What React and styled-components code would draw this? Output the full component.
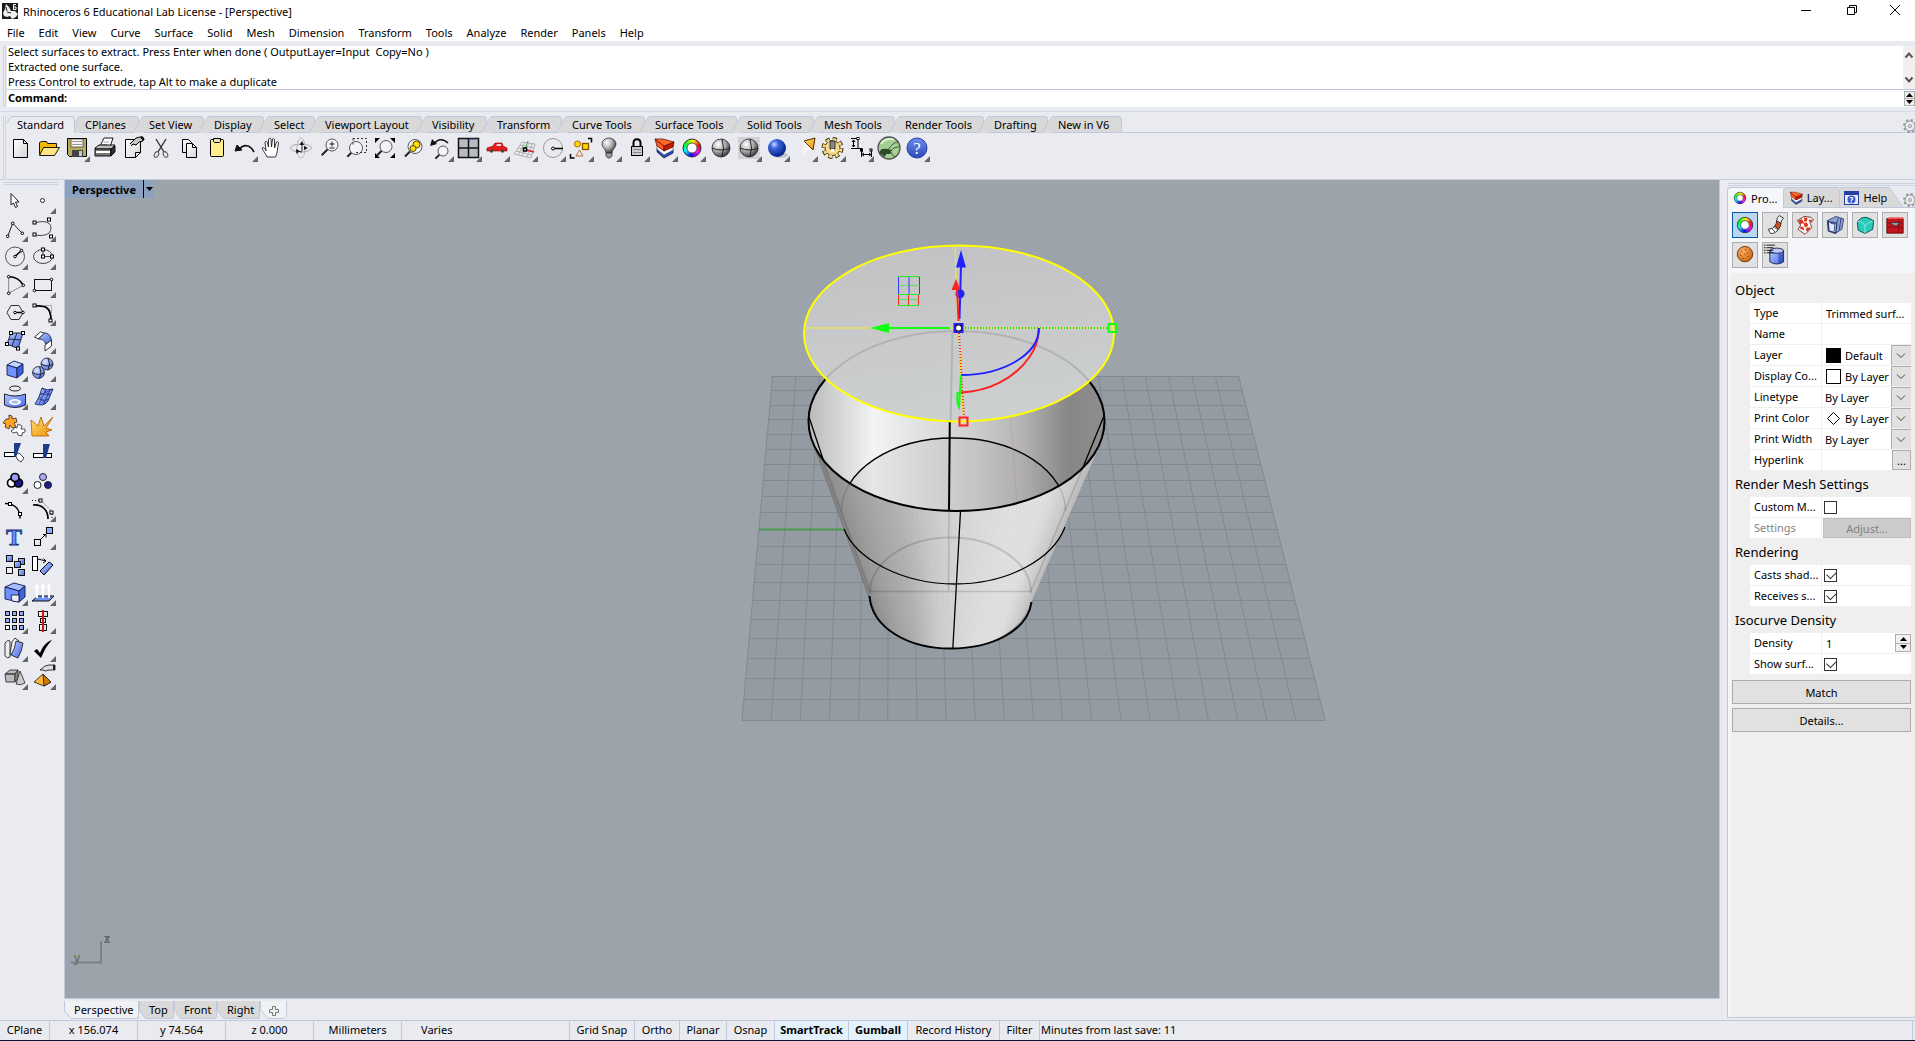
import React, { useState } from 'react';
import styled, { createGlobalStyle } from 'styled-components';

const GlobalStyle = createGlobalStyle`
  * {
    box-sizing: border-box;
  }

  body {
    margin: 0;
    background: #eaebf0;
    color: #000;
    font-family: "Noto Sans", "Open Sans", sans-serif;
    font-size: 11px;
    line-height: 15px;
  }

  button, input, select {
    font: inherit;
    color: inherit;
  }
`;

const LINE = '#c0c8dc';

const Window = styled.div`
  display: flex;
  flex-direction: column;
  height: 100vh;
  min-height: 800px;
  overflow: hidden;
  border-bottom: 1px solid #0a1230;
`;

const TitleBar = styled.header`
  display: flex;
  align-items: center;
  height: 22px;
  padding-left: 2px;
  background: #fff;
`;

const Title = styled.h1`
  flex: 1;
  margin: 0 0 0 5px;
  font-size: 11px;
  font-weight: 400;
`;

const WindowButton = styled.button`
  width: 46px;
  height: 22px;
  padding: 0;
  border: 0;
  background: none;

  &:last-child {
    width: 40px;
  }
`;

const MenuBar = styled.nav`
  display: flex;
  height: 19px;
  background: #fff;
`;

const MenuItem = styled.button`
  padding: 2px 7px 0;
  border: 0;
  background: none;
  white-space: nowrap;
`;

const DockRow = styled.section`
  display: flex;
  padding-left: 3px;
`;

const Grip = styled.div`
  width: 3px;
  margin-right: 1px;
  border: solid #ccd3e4;
  border-width: 0 1px;
`;

const CommandDock = styled(DockRow)`
  height: 71px;
  padding: 5px 0 4px 3px;
  border-bottom: 1px solid #d3daea;
`;

const CommandPane = styled.div`
  flex: 1;
  height: 61px;
`;

const History = styled.div`
  display: flex;
  justify-content: space-between;
  height: 43px;
  padding-left: 1px;
  background: #fff;
`;

const HistoryText = styled.div`
  margin-top: -2px;
  white-space: pre;
`;

const ScrollArrows = styled.div`
  display: flex;
  flex-direction: column;
  justify-content: space-between;
  width: 12px;
  padding: 3px 0;
  background: #f0f0f0;
`;

const ScrollButton = styled.button`
  display: block;
  height: 12px;
  padding: 0;
  border: 0;
  background: none;
  line-height: 0;
`;

const CommandLine = styled.div`
  display: flex;
  height: 18px;
  border-top: 1px solid #bcc5da;
  padding-left: 1px;
  background: #fff;
  font-weight: 700;
`;

const CommandInput = styled.input`
  flex: 1;
  border: 0;
  outline: 0;
  background: none;
`;

const Spin = styled.div`
  display: flex;
  flex-direction: column;
  align-self: stretch;
  width: ${(props) => props.$w}px;
  margin: 1px 0;
  border: 1px solid #adadad;
`;

const SpinButton = styled.button`
  display: flex;
  flex: 1;
  align-items: center;
  justify-content: center;
  padding: 0;
  border: 0;
  border-bottom: ${(props) => (props.$line ? '1px solid #adadad' : '0')};
  background: #f0f0f0;
  line-height: 0;
`;

const ToolDock = styled(DockRow)`
  height: 68px;
  padding-top: 4px;
  border-bottom: 1px solid #c8cfe0;
`;

const ToolPane = styled.div`
  flex: 1;
  min-width: 0;
`;

const TabList = styled.div`
  display: flex;
  align-items: flex-start;
  height: 17px;
  overflow: hidden;
  box-shadow: inset 0 -1px ${LINE};
`;

const TopTab = styled.button`
  display: flex;
  position: relative;
  z-index: ${(props) => (props.$active ? 1 : 0)};
  width: ${(props) => props.$w + 6}px;
  height: ${(props) => (props.$active ? 17 : 16)}px;
  margin-left: -6px;
  padding: 0;
  border: 0;
  background: none;
  white-space: nowrap;
`;

const TopTabLabel = styled.span`
  flex: 1;
  height: 100%;
  padding-left: 5px;
  border: solid ${LINE};
  border-width: 1px 1px 0 0;
  border-top-right-radius: 4px;
  background: ${(props) => (props.$active ? '#eaebf0' : '#d9d9d9')};
  text-align: left;
`;

const TabGear = styled.button`
  margin-left: auto;
  padding: ${(props) => props.$drop || 0}px 0 0;
  width: 12px;
  height: 20px;
  border: 0;
  background: none;
  line-height: 0;
  overflow: hidden;
`;

const IconRow = styled.div`
  display: flex;
  padding-top: 1px;
  margin-left: -1px;
`;

const ToolButton = styled.button`
  width: 28px;
  height: 28px;
  padding: 0;
  border: 0;
  background: none;
  line-height: 0;
`;

const Main = styled.main`
  display: flex;
  flex: 1;
  min-height: 0;
`;

const SideBar = styled.aside`
  width: 64px;
  padding-top: 2px;
`;

const SideGrip = styled.div`
  height: 3px;
  margin: 0 6px 1px 3px;
  border: solid #ccd3e4;
  border-width: 1px 0;
`;

const SideGrid = styled.div`
  display: grid;
  grid-template-columns: 28px 28px;
`;

const Center = styled.div`
  display: flex;
  flex: 1;
  flex-direction: column;
  min-width: 0;
`;

const Viewport = styled.div`
  position: relative;
  flex: 1;
  min-height: 0;
  border: solid ${LINE};
  border-width: 0 1px 1px 1px;
  background: #9ca3aa;
`;

const Scene = styled.svg`
  display: block;
  width: 100%;
  height: 100%;
`;

const ViewportTitle = styled.div`
  position: absolute;
  top: 0;
  left: 0;
  display: flex;
  align-items: center;
  height: 18px;
  padding-left: 7px;
  background: #8ba1be;
  font-weight: 700;
`;

const ViewportMenu = styled.button`
  width: 11px;
  height: 18px;
  margin-left: 7px;
  padding: 0 0 0 1px;
  border: 0;
  border-left: 1px solid #000;
  background: none;
  line-height: 0;
`;

const ViewTabs = styled.div`
  display: flex;
  height: 21px;
  padding-top: 2px;
`;

const ViewTab = styled.button`
  display: flex;
  width: ${(props) => props.$w}px;
  height: 18px;
  padding: 0;
  border: 0;
  background: none;
`;

const ViewTabLabel = styled.span`
  flex: 1;
  height: 18px;
  padding-left: 2px;
  border: solid ${LINE};
  border-width: 0 1px 1px 0;
  border-bottom-right-radius: 3px;
  background: ${(props) => (props.$active ? '#f0f1f5' : '#d9d9d9')};
  line-height: 17px;
  text-align: left;
`;

const Panel = styled.aside`
  display: flex;
  flex-direction: column;
  width: 188px;
  margin: 3px 0 2px 7px;
`;

const PanelGrip = styled.div`
  height: 3px;
  margin-bottom: 1px;
  margin-left: 1px;
  border: solid #ccd3e4;
  border-width: 1px 0;
`;

const PanelTabs = styled.div`
  display: flex;
  align-items: flex-start;
  height: 21px;
  overflow: hidden;
  box-shadow: inset 0 -1px ${LINE};
`;

const PanelTab = styled.button`
  display: flex;
  width: ${(props) => props.$w}px;
  height: ${(props) => (props.$active ? 21 : 20)}px;
  padding: 0;
  border: 0;
  background: none;
`;

const PanelTabLabel = styled.span`
  display: flex;
  flex: 1;
  gap: 2px;
  align-items: center;
  height: 100%;
  padding-left: 3px;
  border: solid ${LINE};
  border-width: 1px 0 0 1px;
  border-top-left-radius: 4px;
  background: ${(props) => (props.$active ? '#f5f6fa' : '#d9d9d9')};
  white-space: nowrap;
`;

const PanelBody = styled.div`
  flex: 1;
  padding-left: 3px;
  border: solid ${LINE};
  border-width: 0 0 1px 1px;
  background: #f5f6fa;
`;

const PageButtons = styled.div`
  display: flex;
  flex-wrap: wrap;
  gap: 4px;
  padding: 4px 6px 11px 1px;
  height: 65px;
`;

const PageButton = styled.button`
  width: 26px;
  height: 26px;
  padding: 0;
  border: 1px solid ${(props) => (props.$active ? '#0a5aa8' : '#adadad')};
  background: ${(props) => (props.$active ? '#b9d8f0' : '#e1e1e1')};
  line-height: 0;
`;

const Properties = styled.form`
  height: calc(100% - 65px);
  padding: 5px 4px 0 1px;
  background: #efefef;
`;

const Group = styled.fieldset`
  min-width: 0;
  margin: 0;
  padding: 0;
  border: 0;
`;

const GroupTitle = styled.legend`
  height: ${(props) => props.$h || 26}px;
  padding: 0 3px;
  font-size: 13px;
  line-height: ${(props) => props.$h || 26}px;
`;

const Row = styled.div`
  display: grid;
  grid-template-columns: 71px 1fr;
  gap: 1px;
  height: 21px;
  padding: 0 0 1px 18px;
`;

const RowLabel = styled.label`
  padding-left: 4px;
  overflow: hidden;
  background: #fff;
  color: ${(props) => (props.$dim ? '#838383' : '#000')};
  line-height: 20px;
  white-space: nowrap;
`;

const Value = styled.div`
  display: flex;
  align-items: center;
  min-width: 0;
  padding-left: ${(props) => props.$pad || 0}px;
  background: #fff;
  white-space: nowrap;
`;

const Swatch = styled.span`
  flex: none;
  width: 15px;
  height: 15px;
  margin-right: 4px;
  border: 1px solid #000;
  background: ${(props) => props.$color};
`;

const Select = styled.select`
  appearance: none;
  flex: 1;
  min-width: 0;
  height: 20px;
  padding: 0;
  border: 0;
  background: none;
`;

const DropMark = styled.span`
  flex: none;
  width: 20px;
  height: 20px;
  border: solid #adadad;
  border-width: 1px 0 0 1px;
  background: #e1e1e1;
  line-height: 0;
  pointer-events: none;
`;

const TextField = styled.input`
  flex: 1;
  min-width: 0;
  height: 20px;
  padding: 0;
  border: 0;
  outline: 0;
  background: none;
`;

const SmallButton = styled.button`
  width: 19px;
  height: 20px;
  padding: 0;
  border: 1px solid #adadad;
  background: #e1e1e1;
`;

const AdjustButton = styled.button`
  flex: 1;
  height: 20px;
  padding: 0;
  border: 1px solid #bfbfbf;
  background: #ccc;
  color: #838383;
`;

const CheckBox = styled.input`
  appearance: none;
  position: relative;
  width: 13px;
  height: 13px;
  margin: 0;
  border: 1px solid #333;
  background: #fff;

  &:checked::after {
    content: '';
    position: absolute;
    top: 1px;
    left: 2px;
    width: 8px;
    height: 5px;
    border: solid #333;
    border-width: 0 0 1px 1px;
    transform: rotate(-45deg);
  }
`;

const PushButton = styled.button`
  display: block;
  width: 100%;
  height: 24px;
  margin-top: ${(props) => props.$gap}px;
  padding: 0;
  border: 1px solid #adadad;
  background: #e1e1e1;
`;

const StatusBar = styled.footer`
  display: flex;
  height: 20px;
  border-top: 1px solid ${LINE};
`;

const StatusCell = styled.button`
  width: ${(props) => props.$w}px;
  padding: ${(props) => (props.$left ? '0 0 2px 19px' : '0 0 2px')};
  border: 0;
  border-right: 1px solid ${LINE};
  background: ${(props) => (props.$on ? '#e2f1fb' : 'none')};
  font-weight: ${(props) => (props.$on ? 700 : 400)};
  text-align: ${(props) => (props.$left ? 'left' : 'center')};
  white-space: nowrap;
`;

const SaveInfo = styled.div`
  flex: 1;
  margin-right: 2px;
  padding-left: 1px;
  border-right: 1px solid ${LINE};
  line-height: 17px;
`;

const HiddenSvg = styled.svg`
  position: absolute;
`;

/* ---------- icons, all drawn in a 28 x 28 box ---------- */

function Defs() {
  return (
    <HiddenSvg width="0" height="0" aria-hidden="true">
      <defs>
        <linearGradient id="blue" x1="0" y1="0" x2="1" y2="1">
          <stop offset="0" stopColor="#b8caff" />
          <stop offset="1" stopColor="#4468e8" />
        </linearGradient>
        <linearGradient id="page" x1="0" y1="0" x2="1" y2="1">
          <stop offset="0" stopColor="#fff" />
          <stop offset="1" stopColor="#d4d4d4" />
        </linearGradient>
        <linearGradient id="gold" x1="0" y1="0" x2="1" y2="1">
          <stop offset="0" stopColor="#ffe27a" />
          <stop offset="1" stopColor="#f08c00" />
        </linearGradient>
        <linearGradient id="helpBlue" x1="0" y1="0" x2="0" y2="1">
          <stop offset="0" stopColor="#6f8cf0" />
          <stop offset="1" stopColor="#2c48b8" />
        </linearGradient>
        <radialGradient id="grayBall" cx="0.35" cy="0.3" r="0.75">
          <stop offset="0" stopColor="#fff" />
          <stop offset="0.5" stopColor="#b0b0b0" />
          <stop offset="1" stopColor="#333" />
        </radialGradient>
        <radialGradient id="blueBall" cx="0.35" cy="0.3" r="0.75">
          <stop offset="0" stopColor="#cfdcff" />
          <stop offset="0.3" stopColor="#3a66e0" />
          <stop offset="1" stopColor="#041c80" />
        </radialGradient>
        <radialGradient id="lightBall" cx="0.35" cy="0.3" r="0.8">
          <stop offset="0" stopColor="#e0e8ff" />
          <stop offset="1" stopColor="#3d62e8" />
        </radialGradient>
        <radialGradient id="clay" cx="0.35" cy="0.3" r="0.8">
          <stop offset="0" stopColor="#ffb060" />
          <stop offset="1" stopColor="#c8600c" />
        </radialGradient>
      </defs>
    </HiddenSvg>
  );
}

function ColorRing({ cx = 14, cy = 14, r = 7, w = 4 }) {
  const parts = Array.from({ length: 24 }, (_, i) => {
    const a = (i * Math.PI) / 12;
    const b = ((i + 1.15) * Math.PI) / 12;
    return (
      <path
        key={i}
        d={`M${cx + r * Math.sin(a)} ${cy - r * Math.cos(a)}A${r} ${r} 0 0 1 ${cx + r * Math.sin(b)} ${cy - r * Math.cos(b)}`}
        stroke={`hsl(${360 - i * 15 + 60}, 95%, 50%)`}
        strokeWidth={w}
        fill="none"
      />
    );
  });
  return (
    <g>
      {parts}
      <circle cx={cx} cy={cy} r={r + w / 2} fill="none" stroke="#333" />
      <circle cx={cx} cy={cy} r={r - w / 2} fill="#fff" stroke="#555" />
    </g>
  );
}

function Squares({ at, s = 3 }) {
  return at.map(([x, y]) => (
    <rect key={`${x},${y}`} x={x - s / 2} y={y - s / 2} width={s} height={s} fill="#fff" stroke="#000" />
  ));
}

function Dots({ at, r = 1.3 }) {
  return at.map(([x, y]) => <circle key={`${x},${y}`} cx={x} cy={y} r={r} fill="#fff" stroke="#000" />);
}

function Lens({ cx, cy, r = 6, tail = 6 }) {
  const k = r * 0.72;
  return (
    <g>
      <path d={`M${cx - k} ${cy + k}l${-tail} ${tail}`} stroke="#222" strokeWidth="2" />
      <circle cx={cx} cy={cy} r={r} fill="#f4f4f6" stroke="#555" />
    </g>
  );
}

function Layers() {
  return (
    <g strokeWidth="0.7">
      <path d="M7 14l7 6 9-5v4l-9 5-7-6z" fill="#2448c0" stroke="#112" />
      <path d="M7 11l7 6 9-5v4l-9 5-7-6z" fill="#fff" stroke="#667" />
      <path d="M5 5l9 7v5l-7-5z" fill="#ff5a1c" stroke="#500" />
      <path d="M14 12l10-4-1 5-9 4z" fill="#c81800" stroke="#500" />
      <path d="M5 5l8 0 11 3-10 4z" fill="#ff6a2c" stroke="#500" />
    </g>
  );
}

function Ball({ x = 15, y = 14, r = 9, fill = 'url(#grayBall)' }) {
  return (
    <g>
      <circle cx={x} cy={y} r={r} fill={fill} stroke="#222" strokeWidth="0.8" />
      <path d={`M${x - r} ${y}q${r} 4 ${2 * r} 0M${x + 1} ${y - r}q3 ${r} 0 ${2 * r}`} fill="none" stroke="#222" />
    </g>
  );
}

const icons = {
  new: <path d="M7.500 5.500h10l4 4v14h-14zM17.500 5.500v4h4" fill="url(#page)" stroke="#000" />,
  open: (
    <g stroke="#000" strokeWidth="0.9">
      <path d="M5.500 20.500v-12l2-1h5l1 2h9v4" fill="#f5b800" />
      <path d="M5.500 21.500l4-8h16l-5 8z" fill="#ffe680" />
    </g>
  ),
  save: (
    <g>
      <path d="M5.500 4.500h19v18h-17l-2-2z" fill="#b8ab5c" stroke="#000" />
      <path d="M9 5h12v8H9z" fill="#f4f4f4" stroke="#333" strokeWidth="0.7" />
      <path d="M10 7.500h10M10 10.500h10" stroke="#999" />
      <path d="M10 16h11v7H10z" fill="#444" />
      <path d="M17 17h3v5h-3z" fill="#c9c9c9" />
    </g>
  ),
  print: (
    <g stroke="#000" strokeWidth="0.9">
      <path d="M10 12l4-8h9l-3 9z" fill="#fff" />
      <path d="M13.500 8h5M12 10.500h5" stroke="#999" />
      <path d="M5 14l4-3h16l-3 4H5z" fill="#bbb" />
      <path d="M5 15h16v7H5z" fill="#777" />
      <path d="M21 15l4-3v6l-4 4z" fill="#333" />
      <path d="M6 18h14" stroke="#fff" strokeWidth="2" />
    </g>
  ),
  props: (
    <g stroke="#000">
      <path d="M7.500 5.500h15v13l-5 5h-10zM22.500 18.500h-5v5" fill="url(#page)" />
      <path d="M12 10l6-6 4-1h3v4l-4 1-3 3-3-1-2 2" fill="#c8c8c8" />
      <path d="M23 3l3 3" strokeWidth="2" />
    </g>
  ),
  cut: (
    <g fill="none">
      <path d="M10 5l8 13M20 5l-8 13" stroke="#333" strokeWidth="1.400" />
      <ellipse cx="10.500" cy="20.500" rx="2" ry="3" transform="rotate(30 10.500 20.500)" stroke="#555" />
      <ellipse cx="19.500" cy="20.500" rx="2" ry="3" transform="rotate(-30 19.500 20.500)" stroke="#555" />
    </g>
  ),
  copy: (
    <g fill="url(#page)" stroke="#000">
      <path d="M8.500 5.500h6l3 3v10h-9z" />
      <path d="M12.500 9.500h6l4 4v10h-10zM18.500 9.500v4h4" />
    </g>
  ),
  paste: (
    <g stroke="#000">
      <rect x="8.500" y="5.500" width="13" height="17" rx="1" fill="#ffee8c" />
      <path d="M11.500 4.500h7v3l-1 1h-5l-1-1z" fill="#e8e0b0" />
    </g>
  ),
  undo: (
    <g>
      <path d="M9 16c4-6 11-6 15 2" fill="none" stroke="#111" strokeWidth="1.700" />
      <path d="M5 17l2-6 5 5z" fill="#111" stroke="#111" />
    </g>
  ),
  hand: (
    <path
      d="M9 23c-1-3-4-6-5-9 1-1 3 0 4 3l-1-9c1-1 2-1 2.500 1l1 4 0-8c1-1 2-1 2.500 0l.5 8 1-8c1-1 2 0 2 1l0 8 2-6c1-1 2 0 2 1-1 5-1 10-3 14z"
      fill="#fff"
      stroke="#222"
      strokeWidth="0.900"
    />
  ),
  orbit: (
    <g fill="none" stroke="#aaa">
      <ellipse cx="15" cy="14" rx="10.500" ry="4" />
      <ellipse cx="15" cy="14" rx="4" ry="10" strokeDasharray="3 1" />
      <path d="M16 10v7M11 17l5 1" stroke="#222" />
      <path d="M13.500 11l2.500-4 2 4zM10 15l3.500 2-3 3zM18 12l4 2-4 2z" fill="#111" stroke="none" />
    </g>
  ),
  zoomDyn: (
    <g>
      <Lens cx={18} cy={11} />
      <path d="M15.500 10h5M18 7.500v5M15.500 14h5" stroke="#222" />
    </g>
  ),
  zoomWin: (
    <g>
      <path d="M11 4.500h13.500v14H20" fill="none" stroke="#333" strokeDasharray="2 2" />
      <Lens cx={14} cy={14} r={6.5} tail={4} />
      <path d="M11 4.500v7M14 18.500h7" stroke="#333" strokeDasharray="2 2" />
    </g>
  ),
  zoomExt: (
    <g>
      <path d="M5 4h5l-5 5zM25 4h-5l5 5zM5 24h5l-5-5zM25 24h-5l5-5z" fill="#000" />
      <Lens cx={16} cy={12.5} tail={5} />
    </g>
  ),
  zoomSel: (
    <g>
      <Lens cx={17} cy={12.500} r={7} tail={5} />
      <circle cx="18.500" cy="10.500" r="3.500" fill="#ffe000" stroke="#554400" />
      <circle cx="15" cy="14.500" r="3" fill="#ffe000" stroke="#554400" />
    </g>
  ),
  undoView: (
    <g>
      <path d="M8 10c4-6 10-5 14-1" fill="none" stroke="#111" strokeWidth="1.700" />
      <path d="M4 12l2-7 5 5z" fill="#111" />
      <Lens cx={17} cy={17} r={5} tail={4} />
    </g>
  ),
  views: (
    <g>
      <path d="M4.500 4.500h20v19h-20z" fill="#b8bcc0" stroke="#111" strokeWidth="1.500" />
      <path d="M14.500 5v19M5 14h20" stroke="#111" strokeWidth="1.500" />
      <path d="M15 5h6" stroke="#3448a0" />
    </g>
  ),
  car: (
    <g>
      <path d="M5 14l6-2 2-3h7l1 3 4 2v3H5z" fill="#e41c1c" stroke="#8a0000" strokeWidth="0.600" />
      <path d="M14 12l1-2h4v2z" fill="#fbd0d0" />
      <circle cx="9.500" cy="17" r="1.700" fill="#444" />
      <circle cx="20.500" cy="17" r="1.700" fill="#444" />
    </g>
  ),
  cplane: (
    <g fill="none" stroke="#aaa" strokeWidth="0.900">
      <path d="M4 20l8-12 13 2-4 14zM6 17l16 4M8 14l15 3M10 11l14 3M8 21l7-13M12 22l7-13M17 23l5-13" />
      <path d="M15 15l3-8" stroke="#3a3" />
      <path d="M16 16l8 2" stroke="#d22" strokeWidth="1.500" />
      <rect x="13.500" y="14" width="3" height="3" fill="#fff" stroke="#000" strokeWidth="1.500" />
    </g>
  ),
  circleTool: (
    <g fill="none">
      <circle cx="15" cy="14" r="9.500" stroke="#999" />
      <path d="M16 14.500h9" stroke="#000" strokeWidth="1.500" />
      <circle cx="15" cy="14.500" r="1.500" fill="#fff" stroke="#000" />
    </g>
  ),
  select: (
    <g>
      <path d="M22 4.500h3.500v4M4.500 20v4h4" fill="none" stroke="#000" strokeWidth="1.500" />
      <circle cx="11.500" cy="10" r="3" fill="#ffe000" stroke="#a60" />
      <rect x="16.500" y="9.500" width="6" height="6" fill="#ffd800" stroke="#850" strokeWidth="1.300" />
      <path d="M13.500 16l3.500 6h-7z" fill="#fde" stroke="#a74" />
    </g>
  ),
  bulb: (
    <g stroke="#333" strokeWidth="0.800">
      <path d="M12 19c0-4-4-5-4-9a7 6 0 0 1 14 0c0 4-4 5-4 9z" fill="url(#grayBall)" />
      <path d="M12 19h6v3l-2 2h-2l-2-2z" fill="#999" />
    </g>
  ),
  lock: (
    <g stroke="#000">
      <path d="M11.500 13V9c0-5 7-5 7 0v4" fill="none" strokeWidth="2" />
      <rect x="9.500" y="12.500" width="11" height="9" fill="#ccc" />
      <path d="M11 15.500h8M11 18.500h8" stroke="#888" />
    </g>
  ),
  layers: <Layers />,
  ring: <ColorRing cx={14} cy={14} r={7} w={4} />,
  shade: <Ball />,
  shadeSel: (
    <g>
      <rect x="4" y="3" width="22" height="22" fill="#cfd0d4" />
      <path d="M4 5.500h22M4 9.500h22M4 13.500h22M4 17.500h22M4 21.500h22" stroke="#eaebf0" strokeDasharray="1 2" />
      <Ball />
    </g>
  ),
  render: (
    <g>
      <ellipse cx="19" cy="21" rx="7" ry="3" fill="#c2c5d0" />
      <circle cx="15" cy="14" r="9" fill="url(#blueBall)" />
    </g>
  ),
  spot: (
    <g>
      <path d="M15 6l9 8-12 6z" fill="#fff" opacity="0.6" />
      <path d="M14 7l11-3-2 12z" fill="url(#gold)" stroke="#543000" />
    </g>
  ),
  gear: (
    <g>
      <circle cx="14.500" cy="14" r="8.500" fill="none" stroke="#433000" strokeWidth="5" strokeDasharray="3.900 2.770" />
      <circle cx="14.500" cy="14" r="7.500" fill="#f6dc8a" stroke="#433000" />
      <circle cx="14.500" cy="14" r="8.500" fill="none" stroke="#f6dc8a" strokeWidth="3" strokeDasharray="2.900 3.770" strokeDashoffset="-0.500" />
      <path d="M12 7h5v8h-5z" fill="#888" stroke="#333" />
      <path d="M13 15h3v3h-3z" fill="#fff" />
    </g>
  ),
  dim: (
    <g fill="none" stroke="#000">
      <path d="M5 4.500h6M5 14.500h8M7.500 6v7M6 8l1.500-2 1.500 2M6 11l1.500 2 1.500-2M12 4.500v10h4v4M15.500 16v7M25.500 16v7M17 20.500h7M18 19l-2 1.500 2 1.500M23 19l2 1.500-2 1.500" />
      <Squares at={[[12, 4.5], [15.5, 16], [25, 16]]} s={2} />
    </g>
  ),
  grasshopper: (
    <g>
      <circle cx="15" cy="14" r="11" fill="#a4cf92" stroke="#555" strokeWidth="1.300" />
      <path d="M5.500 19c0-4 4-5 8-4l4 1-1 4-4 0-2 3z" fill="#2d4a2a" />
      <path d="M14 16c3-5 7-8 10-8M17 17c2-3 4-4 8-4M16 17l5 7" fill="none" stroke="#3d5a38" />
      <path d="M7 10c3-5 9-6 13-4" stroke="#dcf4d0" strokeWidth="2" fill="none" />
    </g>
  ),
  help: (
    <g>
      <circle cx="15" cy="14" r="10" fill="url(#helpBlue)" stroke="#28409c" />
      <text x="15" y="20" fill="#fff" fontSize="17" fontFamily="Liberation Serif, serif" textAnchor="middle">?</text>
    </g>
  ),

  arrow: <path d="M11 7.500V19l2.500-2 2 4.500 2-1-2-4.500h3.500z" fill="#fff" stroke="#222" />,
  point: <circle cx="14.500" cy="14.500" r="2" fill="#fff" stroke="#222" />,
  polyline: (
    <g>
      <path d="M7.700 22.300L12.700 9.300 22.300 19.300" fill="none" stroke="#222" />
      <Dots at={[[7.7, 22.3], [12.7, 9.3], [22.3, 19.3]]} />
    </g>
  ),
  curve: (
    <g>
      <path d="M7 9c5-2 16-3 16 5s-10 8-16 7" fill="none" stroke="#444" />
      <Squares at={[[6.5, 8.5], [21, 5.5], [6.5, 20.5], [23, 22.5]]} />
    </g>
  ),
  circle: (
    <g>
      <circle cx="15" cy="14.500" r="9.500" fill="none" stroke="#555" />
      <path d="M15 14.500l6.500-6" stroke="#000" strokeWidth="1.500" />
      <Dots at={[[15, 14.5], [21.5, 8.5]]} />
    </g>
  ),
  ellipse: (
    <g>
      <ellipse cx="15" cy="14.500" rx="9.500" ry="7" fill="none" stroke="#444" />
      <path d="M15 8v6.500h9" fill="none" stroke="#444" />
      <Squares at={[[15, 7.5], [15, 14.5], [24, 14.5]]} />
    </g>
  ),
  arc: (
    <g fill="none">
      <path d="M8.700 6.700v16.600l14.600-8" stroke="#888" />
      <path d="M8.700 6.700q10 0 14.600 8.600" stroke="#000" strokeWidth="1.500" />
      <Dots at={[[8.7, 6.7], [8.7, 23.3], [23.3, 15.3]]} />
    </g>
  ),
  rect: (
    <g>
      <rect x="6.500" y="9.500" width="17" height="11" fill="none" stroke="#111" />
      <Dots at={[[23.5, 9.5], [6.5, 20.5]]} />
    </g>
  ),
  polygon: (
    <g>
      <path d="M7 14.500l4-7h8l4 7-4 7h-8z" fill="none" stroke="#333" />
      <path d="M15 14.500h8" stroke="#000" strokeWidth="1.500" />
      <Dots at={[[15, 14.5], [23, 14.5]]} />
    </g>
  ),
  fillet: (
    <g fill="none">
      <path d="M16 7.500h7.500V15" stroke="#aaa" />
      <path d="M7 8c12-1 16 3 16 14" stroke="#000" strokeWidth="1.700" />
      <Squares at={[[6.5, 7.5], [22.5, 22.5]]} />
    </g>
  ),
  surface: (
    <g>
      <path d="M11 7h12l-5 15.500L7 18z" fill="url(#blue)" stroke="#223" />
      <path d="M17 7l-5 13M9 13l12 1" stroke="#223" fill="none" />
      <Squares at={[[11, 7], [23, 7], [18, 22.5], [7, 18]]} />
    </g>
  ),
  loft: (
    <g stroke="#222" strokeWidth="0.900">
      <path d="M6.500 11l6-5 4 1-6 6z" fill="#fff" />
      <path d="M10.500 13l6-6c4 0 7 3 7 9l-6 2c0-3-3-5-7-5z" fill="url(#blue)" />
      <path d="M17 19l6.500-5v6l-6.500 5z" fill="#fff" />
    </g>
  ),
  box: (
    <g stroke="#111a50" strokeLinejoin="round" strokeWidth="0.900">
      <path d="M7 11l7-4 9 3-6 4z" fill="#c4d2ff" />
      <path d="M7 11l10 3v10l-10-3z" fill="#6f92ff" />
      <path d="M17 14l6-4v9l-6 5z" fill="#3f60d8" />
    </g>
  ),
  spheres: (
    <g>
      <Ball x={19} y={10} r={6} fill="url(#lightBall)" />
      <Ball x={10.5} y={18.5} r={6} fill="url(#lightBall)" />
    </g>
  ),
  revolve: (
    <g>
      <ellipse cx="15" cy="6.500" rx="5.500" ry="2.500" fill="none" stroke="#222" />
      <path d="M4.500 12q10.500 4 21 0v11q-10.500 5-21 0z" fill="url(#blue)" stroke="#223" />
      <ellipse cx="15" cy="20" rx="6" ry="3" fill="#fff" />
      <ellipse cx="15" cy="20" rx="3.500" ry="1.500" fill="#a9b9f4" />
    </g>
  ),
  mesh: (
    <g stroke="#1c2a70" strokeWidth="0.900">
      <path d="M14 6q5 3 11 1l-3 7-2 5q-4 6-13 3l4-7z" fill="url(#blue)" />
      <path d="M18 7l-7 15M22 8l-7 15M12 11q5 3 11 1M10 16q5 4 11 1M14 6l8 8M11 14l7 8M25 7l-13 6" fill="none" strokeWidth="0.700" />
    </g>
  ),
  join: (
    <g strokeWidth="0.900">
      <path d="M6 9l3 0 0-4 3 1 0 3 4-1 1 4-3 1 2 4-4 1-2-3-1 4-4-2 1-3-3-1z" fill="#ffa51e" stroke="#533" />
      <path d="M14 17l3 1 1-4 4 2-1 3 4 0 0 3-3 1 0 3-4-1-1-3-4 1-2-2 3-2z" fill="#fff" stroke="#444" />
    </g>
  ),
  explode: <path d="M3 10l7 6 3-9 3 9 9-9-7 11 6 2-6 2 3 4H4z" fill="url(#gold)" stroke="#b45a00" strokeWidth="0.800" />,
  trim: (
    <g>
      <path d="M15 17l4-2 5 5-3 4-3-2z" fill="#fff" stroke="#444" />
      <rect x="4.500" y="14.500" width="11" height="4" fill="#fff" stroke="#000" />
      <path d="M14 5h7l-5 14h-2z" fill="#1f3b8c" />
    </g>
  ),
  split: (
    <g>
      <rect x="5.500" y="15.500" width="18" height="4" fill="#fff" stroke="#000" />
      <path d="M15 6h7l-4 14h-3z" fill="#1f3b8c" />
    </g>
  ),
  group: (
    <g stroke="#000" strokeWidth="1.700">
      <circle cx="11.500" cy="17" r="4" fill="#fff" />
      <circle cx="18.500" cy="17" r="4" fill="#1c1c8c" />
      <circle cx="15" cy="11.500" r="4" fill="#9a9af8" />
    </g>
  ),
  ungroup: (
    <g stroke="#222">
      <circle cx="15" cy="11" r="3.500" fill="#a8a8fa" />
      <circle cx="9.500" cy="19" r="3.500" fill="#fff" />
      <circle cx="20" cy="19" r="3.500" fill="#1c1c8c" />
    </g>
  ),
  editPts: (
    <g>
      <path d="M5 9.500c9 0 15 5 15 15" fill="none" stroke="#000" strokeWidth="1.500" />
      <Squares at={[[10, 10], [20, 20]]} />
    </g>
  ),
  ctrlPts: (
    <g fill="none">
      <path d="M4 6.500h9l11 11v9" stroke="#000" strokeDasharray="1 2" />
      <path d="M5 11c9-1 15 5 15 14" stroke="#000" strokeWidth="1.700" />
      <Squares at={[[12.5, 6.5], [23.5, 18.5]]} />
    </g>
  ),
  text: (
    <text x="14" y="23" fill="#6c90fa" stroke="#1a2a6c" strokeWidth="0.800" fontSize="24" fontWeight="700" fontFamily="Liberation Serif, serif" textAnchor="middle">T</text>
  ),
  move: (
    <g stroke="#000">
      <rect x="18.500" y="5.500" width="6" height="6" fill="#8eacff" />
      <rect x="6.500" y="17.500" width="6" height="6" fill="url(#page)" />
      <path d="M13 17l5-5M15 12.500h3v3" fill="none" />
    </g>
  ),
  copies: (
    <g stroke="#111" fill="url(#blue)">
      <rect x="6.500" y="5.500" width="6" height="6" />
      <rect x="18.500" y="8.500" width="6" height="6" />
      <rect x="14.500" y="11.500" width="6" height="6" />
      <rect x="18.500" y="19.500" width="6" height="6" />
      <rect x="6.500" y="17.500" width="6" height="6" fill="#eee" />
    </g>
  ),
  rotate: (
    <g stroke="#000">
      <rect x="4.500" y="6.500" width="5" height="14" fill="#fff" />
      <path d="M10 9l8 2M15.500 8.500l2.500 2.500-3 2" fill="none" />
      <path d="M12 21l9-9 4 3-9 10z" fill="url(#blue)" />
    </g>
  ),
  solidEdit: (
    <g stroke="#111a50" strokeWidth="0.900">
      <path d="M5 9l9-4 11 3-6 5z" fill="#a7bcff" />
      <path d="M5 9l14 4v11l-14-3z" fill="#6f92ff" />
      <path d="M19 13l6-5v11l-6 5z" fill="#4464d8" />
      <path d="M11 17l8 0v7l-7-1z" fill="#eee" />
    </g>
  ),
  extrude: (
    <g>
      <path d="M4 23l6-5h16l-5 5z" fill="#6f8ff5" stroke="#111" />
      <path d="M9 20V9M15 20V9M21 20V9" stroke="#fff" strokeWidth="2" />
      <path d="M6.500 10L9 5l2.500 5zM12.500 10L15 5l2.500 5zM18.500 10L21 5l2.500 5z" fill="#fff" />
    </g>
  ),
  array: (
    <g stroke="#111">
      {[5.5, 12.5, 19.5].map((y) =>
        [5.5, 12.5, 19.5].map((x) => (
          <rect key={`${x}-${y}`} x={x} y={y} width="4" height="4" fill={x < 6 && y > 19 ? '#fff' : '#8eacff'} />
        ))
      )}
    </g>
  ),
  align: (
    <g stroke="#111" fill="url(#page)">
      <rect x="10.500" y="5.500" width="9" height="5" />
      <rect x="12.500" y="12.500" width="5" height="4" />
      <rect x="11.500" y="18.500" width="7" height="6" />
      <path d="M15 4v22" stroke="#d01818" strokeWidth="2" />
    </g>
  ),
  flow: (
    <g stroke="#222" strokeWidth="0.900">
      <path d="M5 9q3-4 5-2v16q-3 2-5-1z" fill="#eee" />
      <path d="M12 8l3-4 4 3-5 13h-4z" fill="#f6f6f6" />
      <path d="M16 7l7 2q-1 8-5 15l-7-3q4-6 5-14z" fill="url(#blue)" />
    </g>
  ),
  check: <path d="M6 17l3-2 3 4c3-7 6-11 12-13-5 5-8 11-11 18z" fill="#000" />,
  solids: (
    <g stroke="#333" strokeWidth="0.900">
      <path d="M5 12l5-4h8l-3 4zM5 12h10v8l-9 0z" fill="#bbb" />
      <path d="M15 12l3-4v8l-3 4z" fill="#888" />
      <path d="M20 9l5 12q-4 3-9 1z" fill="#ccc" />
    </g>
  ),
  pyramid: (
    <g stroke="#222" strokeWidth="0.900">
      <path d="M12 8l5-4 4-1h6v5l-6 0-4 1-2-1z" fill="#ddd" />
      <path d="M26 3v5" strokeWidth="2" />
      <path d="M15 12l8 8-7 4-10-4z" fill="#ffb938" />
      <path d="M15 12l8 8-7 4z" fill="#cc7a0a" />
    </g>
  ),

  brush: (
    <g stroke="#222">
      <path d="M6 19q6 0 8-4l4 4q-3 5-9 5z" fill="#fff" />
      <path d="M14 15q2-3 2-6l5 3q0 4-3 7z" fill="#d8501c" />
      <path d="M16 9q0-4 3-6l5 3q-3 2-3 6z" fill="#eee" />
      <path d="M10 18l4 4M13 16l4 4" />
    </g>
  ),
  texture: (
    <g>
      <path d="M5 9l8-5 8 1 3 3-4 4 2 5-8 8-8-6 3-5z" fill="#fff" stroke="#622" />
      <path d="M6 9l4-2 3 4-4 2zM13 5l4 1-1 4-3 0zM12 12l4-1 2 4-4 2zM8 16l4 0 1 4-4-1zM16 17l5 0-4 5-2-2zM18 8l5 0-3 4z" fill="#e0321c" />
    </g>
  ),
  decal: (
    <g stroke="#28386c">
      <path d="M5 9l10-5 9 3-2 12-8 5-8-3z" fill="#8fa2d8" />
      <path d="M6 10l10 2-1 11-8-2z" fill="#dfe8ff" strokeWidth="1.500" />
      <path d="M9 12l5 1-1 8M18 6l-2 5M21 6l-2 14" fill="none" />
    </g>
  ),
  soft: (
    <g stroke="#044">
      <path d="M5 10q5-6 10-5t9 4l-1 10-9 5-8-4z" fill="#2cc9bb" />
      <path d="M5 10q7 0 9 5v9M14 15q3-4 9-5" fill="none" stroke="#8ff0e6" />
    </g>
  ),
  thick: (
    <g>
      <path d="M4.500 6.500h19v17h-19z" fill="#c4151c" stroke="#500" />
      <path d="M5 7h18l1-2H7z" fill="#e85a5a" />
      <path d="M7 12l4-1h7l4 1-4 1-2 2h-3l-2-2z" fill="#999" stroke="#222" strokeWidth="0.800" />
      <path d="M5 16.500h18M18.500 7v16" stroke="#8a0810" />
    </g>
  ),
  clay: (
    <g>
      <circle cx="14" cy="13" r="9" fill="url(#clay)" stroke="#5c2c08" />
      <path d="M9 9l2 1M14 7l1 2M18 11l-2 1M8 14l2 1M13 13l2 1M17 16l2-1M11 18l2 0" stroke="#8a4410" />
    </g>
  ),
  userText: (
    <g>
      <path d="M8 9v13q8 5 16 0V9z" fill="url(#blue)" stroke="#113" />
      <path d="M18 12h6v10q-3 2-6 2z" fill="#2440b0" opacity="0.600" />
      <ellipse cx="16" cy="9" rx="8" ry="3" fill="#b8c8ff" stroke="#113" />
      <path d="M1 2.500h2M4 2.500h10M1 5.500h2M4 5.500h8M1 8.500h2M4 8.500h8M1 11.500h2M4 11.500h8" stroke="#000" />
    </g>
  ),
};

function Icon({ name, size = 28, flyout }) {
  return (
    <svg width={size} height={size} viewBox="0 0 28 28" aria-hidden="true">
      {icons[name]}
      {flyout && <path d="M28 22v6h-6z" fill="#666" />}
    </svg>
  );
}

function Triangle({ down }) {
  return (
    <svg width="7" height="4" viewBox="0 0 7 4" aria-hidden="true">
      <path d={down ? 'M0 0h7L3.500 4z' : 'M0 4h7L3.500 0z'} fill="#000" />
    </svg>
  );
}

function Chevron({ up }) {
  return (
    <svg width="10" height="10" viewBox="0 0 10 10" aria-hidden="true">
      <path d={up ? 'M1.500 7.500L5 3.500l3.500 4' : 'M1.500 2.500L5 6.500l3.500-4'} fill="none" stroke="#555" strokeWidth="2" />
    </svg>
  );
}

function GearMark() {
  return (
    <svg width="14" height="14" viewBox="0 0 14 14" aria-hidden="true">
      <g fill="none" stroke="#999">
        <circle cx="7" cy="7" r="5" />
        <circle cx="7" cy="7" r="6" strokeWidth="2" strokeDasharray="2.300 2.400" />
        <circle cx="7" cy="7" r="1.500" />
      </g>
    </svg>
  );
}

/* ---------- viewport ---------- */

const GRID_Y = [376, 390, 405, 419, 434, 449, 464, 480, 496, 512, 529, 546, 564, 582, 600, 619, 638, 658, 678, 699, 720];

const RIM = { cx: 956.5, cy: 421, rx: 148, ry: 90 };
const BASE = { cx: 950.5, cy: 593, rx: 80.5, ry: 55.5 };

const SHADES = [
  [0, 122],
  [0.06, 145],
  [0.18, 163],
  [0.3, 178],
  [0.42, 203],
  [0.52, 214],
  [0.68, 224],
  [0.8, 224],
  [0.9, 205],
  [1, 178],
];

function shadeAt(t) {
  const i = Math.max(1, SHADES.findIndex(([stop]) => stop >= t));
  const [a, va] = SHADES[i - 1];
  const [b, vb] = SHADES[i];
  const v = Math.round(va + ((vb - va) * (t - a)) / (b - a));
  return `rgb(${v}, ${v}, ${v})`;
}

function on(e, angle) {
  return `${(e.cx + e.rx * Math.cos(angle)).toFixed(1)} ${(e.cy + e.ry * Math.sin(angle)).toFixed(1)}`;
}

function CupWall() {
  const from = 0.2;
  const count = 90;
  const step = (Math.PI - 2 * from) / count;
  return Array.from({ length: count }, (_, i) => {
    const a = from + i * step;
    const b = a + step;
    const t = (1 + Math.cos(a + step / 2)) / 2;
    const color = shadeAt(t);
    return <path key={i} d={`M${on(RIM, a)}L${on(RIM, b)}L${on(BASE, b)}L${on(BASE, a)}z`} fill={color} stroke={color} strokeWidth="0.600" />;
  });
}

function Grid() {
  return (
    <g>
      <path d="M772.500 376H1239L1325 720H742z" fill="#949ba3" />
      <g stroke="#848991">
        {GRID_Y.map((y) => {
          const k = (y - 376) / 344;
          return <path key={y} d={`M${772.5 - 30.5 * k} ${y + 0.5}H${1239 + 86 * k}`} />;
        })}
        {GRID_Y.map((_, i) => (
          <path key={i} d={`M${772.5 + 23.3 * i} 376L${742 + 29.15 * i} 720`} />
        ))}
      </g>
      <path d="M759 529.500h88" stroke="#4a9a52" strokeWidth="2" />
    </g>
  );
}

function Cup() {
  return (
    <g fill="none">
      <CupWall />
      <g stroke="#000" strokeOpacity="0.140" strokeWidth="1.500">
        <path d="M841.500 511a112 73 0 0 1 224 0" />
        <path d="M870 593a80.500 55.500 0 0 1 161 0" strokeWidth="2" />
        <path d="M870 591.500h161M949 511L948.500 593" />
        <path d="M822 458L870 591M1082 470L1031 591" />
      </g>
      <ellipse {...RIM} fill="url(#inside)" />
      <g clipPath="url(#rimClip)">
        <ellipse cx="953.500" cy="511" rx="112" ry="73" fill="#888" fillOpacity="0.120" stroke="#000" strokeWidth="1.300" />
        <path d="M809 417l14 42M1103.500 417l-22 54" stroke="#000" strokeWidth="1.300" />
        <path d="M950.500 340L949 511" stroke="#000" strokeWidth="2" />
        <path d="M1008 386l9 120" stroke="#c88" strokeOpacity="0.350" />
      </g>
      <path d="M844 529c12 30 58 55 111 55s98-25 110-57" stroke="#000" strokeWidth="1.300" />
      <path d="M960.500 511L952.800 648.700" stroke="#000" strokeWidth="1.300" />
      <path d="M869.500 596C872 628 908 648.500 950.500 648.500S1028 630 1031.500 602" stroke="#000" strokeWidth="2" />
      <ellipse {...RIM} stroke="#000" strokeWidth="2" />
    </g>
  );
}

function Lid() {
  return (
    <g fill="none">
      <ellipse cx="959" cy="333.500" rx="155" ry="88" fill="url(#lid)" />
      <g clipPath="url(#lidClip)" stroke="#b2b3b4" strokeWidth="2">
        <ellipse {...RIM} />
        <path d="M952.500 331L950.500 425" />
      </g>
      <ellipse cx="959" cy="333.500" rx="155" ry="88" stroke="#ff0" strokeWidth="2" />
      <path d="M955 246l3 82M804 328h308M958.500 328l5 93" stroke="#f2ee30" />
    </g>
  );
}

function Gumball() {
  return (
    <g fill="none">
      <g strokeWidth="1">
        <path d="M898.500 276v18M919.500 276v18M909 276v18" stroke="#33f" />
        <path d="M898.500 295v11M918.500 295v11M908.500 295v11" stroke="#f22" />
        <path d="M898 276.500h22M898 294.500h22M898 305.500h21" stroke="#2e2" />
        <path d="M898 285.500h22M898 299.500h21" stroke="#2e2" strokeOpacity="0.600" />
      </g>
      <path d="M888 328h62" stroke="#1f1" strokeWidth="2" />
      <path d="M870 328l19-5v10z" fill="#1f1" />
      <path d="M965 328h143" stroke="#1d1" strokeWidth="2" strokeDasharray="1 2" />
      <path d="M959 333l5 84" stroke="#f22" strokeWidth="2" strokeDasharray="1 2" />
      <path d="M959.500 319l1.500-53" stroke="#22f" strokeWidth="2" />
      <path d="M961 250l5 17.500h-10z" fill="#22f" />
      <circle cx="960" cy="293.700" r="4.500" fill="#22f" />
      <path d="M958.500 321l-1.500-33" stroke="#f22" strokeWidth="2" />
      <path d="M956 279l4.500 11h-9z" fill="#f22" />
      <path d="M1038.500 330c0 10-4 20-9 27-16 23-42 34-68.500 35.500" stroke="#f22" strokeWidth="2" />
      <path d="M1039 328c0 26-35 47-78 47" stroke="#22f" strokeWidth="2" />
      <path d="M961 375l-1 17-1 15c-2-4-2-10-1.500-14h3" stroke="#1f1" strokeWidth="2" />
      <rect x="1108.500" y="324" width="8" height="8" stroke="#1f1" strokeWidth="2" />
      <rect x="959.500" y="417.500" width="8" height="8" stroke="#f22" strokeWidth="2" />
      <rect x="954.500" y="324" width="8" height="8" fill="#111" stroke="#22d" strokeWidth="2" />
      <circle cx="958.500" cy="328" r="2.500" fill="#fff" />
    </g>
  );
}

function ViewportScene() {
  return (
    <Scene viewBox="65 180 1654 818" role="img" aria-label="Perspective view">
      <defs>
        <linearGradient id="inside">
          <stop offset="0" stopColor="#b9baba" />
          <stop offset="0.220" stopColor="#f2f4f5" />
          <stop offset="0.350" stopColor="#e3e4e5" />
          <stop offset="0.550" stopColor="#cfcfcf" />
          <stop offset="0.720" stopColor="#b4b4b4" />
          <stop offset="0.880" stopColor="#868686" />
          <stop offset="1" stopColor="#8e8e8e" />
        </linearGradient>
        <linearGradient id="lid" x1="0.300" y1="0" x2="0.500" y2="1">
          <stop offset="0" stopColor="#c2c2c4" />
          <stop offset="1" stopColor="#cdd0d0" />
        </linearGradient>
        <clipPath id="rimClip">
          <ellipse {...RIM} />
        </clipPath>
        <clipPath id="lidClip">
          <ellipse cx="959" cy="333.500" rx="155" ry="88" />
        </clipPath>
      </defs>
      <Grid />
      <Cup />
      <Lid />
      <Gumball />
      <g stroke="#7c7f84" strokeWidth="2" fill="none">
        <path d="M71 962.500h31M101 941v21" />
      </g>
      <g fill="#5c5f63" fontSize="12" fontFamily="Open Sans, sans-serif">
        <text x="74" y="962">y</text>
        <text x="104" y="943">z</text>
        <text x="104" y="943">x</text>
      </g>
    </Scene>
  );
}

/* ---------- data ---------- */

const menus = ['File', 'Edit', 'View', 'Curve', 'Surface', 'Solid', 'Mesh', 'Dimension', 'Transform', 'Tools', 'Analyze', 'Render', 'Panels', 'Help'];

const toolTabs = [
  ['Standard', 68],
  ['CPlanes', 64],
  ['Set View', 65],
  ['Display', 60],
  ['Select', 51],
  ['Viewport Layout', 107],
  ['Visibility', 65],
  ['Transform', 75],
  ['Curve Tools', 83],
  ['Surface Tools', 92],
  ['Solid Tools', 77],
  ['Mesh Tools', 81],
  ['Render Tools', 89],
  ['Drafting', 64],
  ['New in V6', 74],
];

// a trailing + marks a button that has a flyout
const topTools =
  'new open save+ print props cut copy paste undo+ hand orbit zoomDyn zoomWin zoomExt zoomSel undoView+ views+ car+ cplane+ circleTool+ select+ bulb+ lock+ layers+ ring+ shade shadeSel+ render+ spot+ gear+ dim+ grasshopper help+'.split(' ');

const sideTools =
  'arrow point+ polyline+ curve+ circle+ ellipse+ arc+ rect+ polygon+ fillet+ surface+ loft+ box+ spheres+ revolve+ mesh+ join explode trim split group+ ungroup editPts ctrlPts+ text move+ copies rotate solidEdit+ extrude+ array+ align+ flow+ check+ solids+ pyramid+'.split(' ');

const viewTabs = [
  ['Perspective', 75],
  ['Top', 35],
  ['Front', 43],
  ['Right', 43],
];

const pages = ['ring', 'brush', 'texture', 'decal', 'soft', 'thick', 'clay', 'userText'];

const statusCells = [
  { text: 'CPlane', w: 50 },
  { text: 'x 156.074', w: 88 },
  { text: 'y 74.564', w: 88 },
  { text: 'z 0.000', w: 88 },
  { text: 'Millimeters', w: 88 },
  { text: 'Varies', w: 168, left: true },
  { text: 'Grid Snap', w: 65 },
  { text: 'Ortho', w: 45 },
  { text: 'Planar', w: 47 },
  { text: 'Osnap', w: 48 },
  { text: 'SmartTrack', w: 74, on: true },
  { text: 'Gumball', w: 59, on: true },
  { text: 'Record History', w: 92 },
  { text: 'Filter', w: 40 },
];

function Tools({ list }) {
  return list.map((item) => {
    const name = item.replace('+', '');
    return (
      <ToolButton key={name} aria-label={name}>
        <Icon name={name} flyout={item.endsWith('+')} />
      </ToolButton>
    );
  });
}

function ToolTabs() {
  const [active, setActive] = useState('Standard');
  return (
    <TabList role="tablist">
      {toolTabs.map(([name, w]) => {
        const isActive = name === active;
        return (
          <TopTab key={name} role="tab" aria-selected={isActive} $active={isActive} $w={w} onClick={() => setActive(name)}>
            <svg width="11" height="17" viewBox="0 0 11 17" aria-hidden="true">
              <path d="M0 17L9 2q1-1.500 2-1.500V17z" fill={isActive ? '#eaebf0' : '#d9d9d9'} />
              <path d="M0 17L9 2q1-1.500 2-1.500" fill="none" stroke={LINE} />
            </svg>
            <TopTabLabel $active={isActive}>{name}</TopTabLabel>
          </TopTab>
        );
      })}
      <TabGear aria-label="Toolbar options">
        <GearMark />
      </TabGear>
    </TabList>
  );
}

function DropRow({ label, value, swatch, diamond }) {
  const id = `prop-${label.replace(/\W/g, '')}`;
  return (
    <Row>
      <RowLabel htmlFor={id}>{label}</RowLabel>
      <Value $pad={swatch || diamond ? 4 : 3}>
        {swatch && <Swatch $color={swatch} />}
        {diamond && (
          <svg width="19" height="15" viewBox="0 0 19 15" aria-hidden="true">
            <path d="M7.500 1.500l6 6-6 6-6-6z" fill="#fff" stroke="#000" />
          </svg>
        )}
        <Select id={id} defaultValue={value}>
          <option>{value}</option>
        </Select>
        <DropMark>
          <svg width="19" height="19" viewBox="0 0 19 19" aria-hidden="true">
            <path d="M5 7.500l4 4 4-4" fill="none" stroke="#444" />
          </svg>
        </DropMark>
      </Value>
    </Row>
  );
}

function CheckRow({ label, checked }) {
  const id = `prop-${label.replace(/\W/g, '')}`;
  return (
    <Row>
      <RowLabel htmlFor={id}>{label}</RowLabel>
      <Value $pad={2}>
        <CheckBox type="checkbox" id={id} defaultChecked={checked} />
      </Value>
    </Row>
  );
}

function PropertiesPanel() {
  return (
    <Panel>
      <PanelGrip />
      <PanelTabs role="tablist">
        <PanelTab role="tab" aria-selected="true" $active $w={56}>
          <PanelTabLabel $active>
            <Icon name="ring" size={18} />
            Pro...
          </PanelTabLabel>
        </PanelTab>
        <PanelTab role="tab" $w={57}>
          <PanelTabLabel>
            <Icon name="layers" size={18} />
            Lay...
          </PanelTabLabel>
        </PanelTab>
        <PanelTab role="tab" $w={64}>
          <PanelTabLabel>
            <svg width="18" height="14" viewBox="0 0 18 14" aria-hidden="true">
              <rect x="1.500" y="0.500" width="14" height="13" fill="#e6ebff" stroke="#2440a0" />
              <path d="M2 1h13v3H2z" fill="#2440a0" />
              <circle cx="8.500" cy="8.500" r="4" fill="#3858cc" />
              <text x="8.500" y="11.500" fill="#fff" fontSize="8" fontWeight="700" textAnchor="middle">?</text>
            </svg>
            Help
          </PanelTabLabel>
          <svg width="14" height="20" viewBox="0 0 14 20" aria-hidden="true">
            <path d="M0 0L14 20H0z" fill="#d9d9d9" />
            <path d="M0 0.500L14 19.500" stroke={LINE} />
          </svg>
        </PanelTab>
        <TabGear $drop={5} aria-label="Panel options">
          <GearMark />
        </TabGear>
      </PanelTabs>
      <PanelBody>
        <PageButtons>
          {pages.map((name, i) => (
            <PageButton key={name} $active={i === 0} aria-label={name}>
              <Icon name={name} size={24} />
            </PageButton>
          ))}
        </PageButtons>
        <Properties onSubmit={(event) => event.preventDefault()}>
          <Group>
            <GroupTitle $h={25}>Object</GroupTitle>
            <Row>
              <RowLabel as="span">Type</RowLabel>
              <Value $pad={4}>Trimmed surf...</Value>
            </Row>
            <Row>
              <RowLabel htmlFor="prop-name">Name</RowLabel>
              <Value>
                <TextField id="prop-name" />
              </Value>
            </Row>
            <DropRow label="Layer" value="Default" swatch="#000" />
            <DropRow label="Display Co..." value="By Layer" swatch="#fff" />
            <DropRow label="Linetype" value="By Layer" />
            <DropRow label="Print Color" value="By Layer" diamond />
            <DropRow label="Print Width" value="By Layer" />
            <Row>
              <RowLabel htmlFor="prop-link">Hyperlink</RowLabel>
              <Value>
                <TextField id="prop-link" />
                <SmallButton type="button">...</SmallButton>
              </Value>
            </Row>
          </Group>
          <Group>
            <GroupTitle>Render Mesh Settings</GroupTitle>
            <CheckRow label="Custom M..." />
            <Row>
              <RowLabel as="span" $dim>Settings</RowLabel>
              <Value $pad={1}>
                <AdjustButton type="button" disabled>Adjust...</AdjustButton>
              </Value>
            </Row>
          </Group>
          <Group>
            <GroupTitle>Rendering</GroupTitle>
            <CheckRow label="Casts shad..." checked />
            <CheckRow label="Receives s..." checked />
          </Group>
          <Group>
            <GroupTitle>Isocurve Density</GroupTitle>
            <Row>
              <RowLabel htmlFor="prop-density">Density</RowLabel>
              <Value $pad={4}>
                <TextField id="prop-density" defaultValue="1" />
                <Spin $w={16}>
                  <SpinButton type="button" $line aria-label="More"><Triangle /></SpinButton>
                  <SpinButton type="button" aria-label="Less"><Triangle down /></SpinButton>
                </Spin>
              </Value>
            </Row>
            <CheckRow label="Show surf..." checked />
          </Group>
          <PushButton type="button" $gap={5}>Match</PushButton>
          <PushButton type="button" $gap={4}>Details...</PushButton>
        </Properties>
      </PanelBody>
    </Panel>
  );
}

function App() {
  return (
    <Window>
      <GlobalStyle />
      <Defs />
      <TitleBar>
        <svg width="16" height="16" viewBox="0 0 16 16" aria-hidden="true">
          <path d="M0 0h16v16H0z" fill="#1c1c1c" />
          <path d="M1 10l2-4 1-5 3 3 2 4 4 0 3 3-2 3-4 2-2-3-3 1-3-1z" fill="#eee" />
          <path d="M5 9l4 1M4 4l1 4" stroke="#222" />
          <path d="M14 1.500h-2.500v5h2.500v-2.500h-2.500" fill="none" stroke="#fff" />
        </svg>
        <Title>Rhinoceros 6 Educational Lab License - [Perspective]</Title>
        <WindowButton aria-label="Minimize">
          <svg width="12" height="12" viewBox="0 0 12 12"><path d="M1 6.500h10" stroke="#000" /></svg>
        </WindowButton>
        <WindowButton aria-label="Restore">
          <svg width="12" height="12" viewBox="0 0 12 12">
            <path d="M1.500 3.500h7v7h-7zM3.500 3V1.500h7v7H9" fill="none" stroke="#000" />
          </svg>
        </WindowButton>
        <WindowButton aria-label="Close">
          <svg width="12" height="12" viewBox="0 0 12 12"><path d="M1 1l10 10M11 1L1 11" stroke="#000" /></svg>
        </WindowButton>
      </TitleBar>
      <MenuBar>
        {menus.map((name) => (
          <MenuItem key={name}>{name}</MenuItem>
        ))}
      </MenuBar>

      <CommandDock>
        <Grip />
        <CommandPane>
          <History>
            <HistoryText>
              {'Select surfaces to extract. Press Enter when done ( OutputLayer=Input  Copy=No )\nExtracted one surface.\nPress Control to extrude, tap Alt to make a duplicate'}
            </HistoryText>
            <ScrollArrows>
              <ScrollButton aria-label="Scroll up"><Chevron up /></ScrollButton>
              <ScrollButton aria-label="Scroll down"><Chevron /></ScrollButton>
            </ScrollArrows>
          </History>
          <CommandLine>
            <label htmlFor="command">Command:</label>
            <CommandInput id="command" />
            <Spin $w={11}>
              <SpinButton $line aria-label="Previous"><Triangle /></SpinButton>
              <SpinButton aria-label="Next"><Triangle down /></SpinButton>
            </Spin>
          </CommandLine>
        </CommandPane>
      </CommandDock>

      <ToolDock>
        <Grip />
        <ToolPane>
          <ToolTabs />
          <IconRow>
            <Tools list={topTools} />
          </IconRow>
        </ToolPane>
      </ToolDock>

      <Main>
        <SideBar>
          <SideGrip />
          <SideGrid>
            <Tools list={sideTools} />
          </SideGrid>
        </SideBar>
        <Center>
          <Viewport>
            <ViewportScene />
            <ViewportTitle>
              Perspective
              <ViewportMenu aria-label="Viewport menu"><Triangle down /></ViewportMenu>
            </ViewportTitle>
          </Viewport>
          <ViewTabs role="tablist">
            {viewTabs.map(([name, w], i) => (
              <ViewTab key={name} role="tab" aria-selected={i === 0} $w={w}>
                <svg width="8" height="18" viewBox="0 0 8 18" aria-hidden="true">
                  <path d="M0 0V10L7 18H8V0z" fill={i === 0 ? '#f0f1f5' : '#d9d9d9'} />
                  <path d="M0.500 0V10L7 17.500H8" fill="none" stroke={LINE} />
                </svg>
                <ViewTabLabel $active={i === 0}>{name}</ViewTabLabel>
              </ViewTab>
            ))}
            <ViewTab $w={27} aria-label="New viewport tab">
              <svg width="27" height="18" viewBox="0 0 27 18" aria-hidden="true">
                <path d="M0.500 0V9L8 17.500H24.500L26.500 15.500V0" fill="#f0f1f5" stroke={LINE} />
                <path d="M12.500 5.500h3v3h3v3h-3v3h-3v-3h-3v-3h3z" fill="none" stroke="#777" />
              </svg>
            </ViewTab>
          </ViewTabs>
        </Center>
        <PropertiesPanel />
      </Main>

      <StatusBar>
        {statusCells.map((cell) => (
          <StatusCell key={cell.text} $w={cell.w} $on={cell.on} $left={cell.left}>
            {cell.text}
          </StatusCell>
        ))}
        <SaveInfo>Minutes from last save: 11</SaveInfo>
      </StatusBar>
    </Window>
  );
}

export default App;
